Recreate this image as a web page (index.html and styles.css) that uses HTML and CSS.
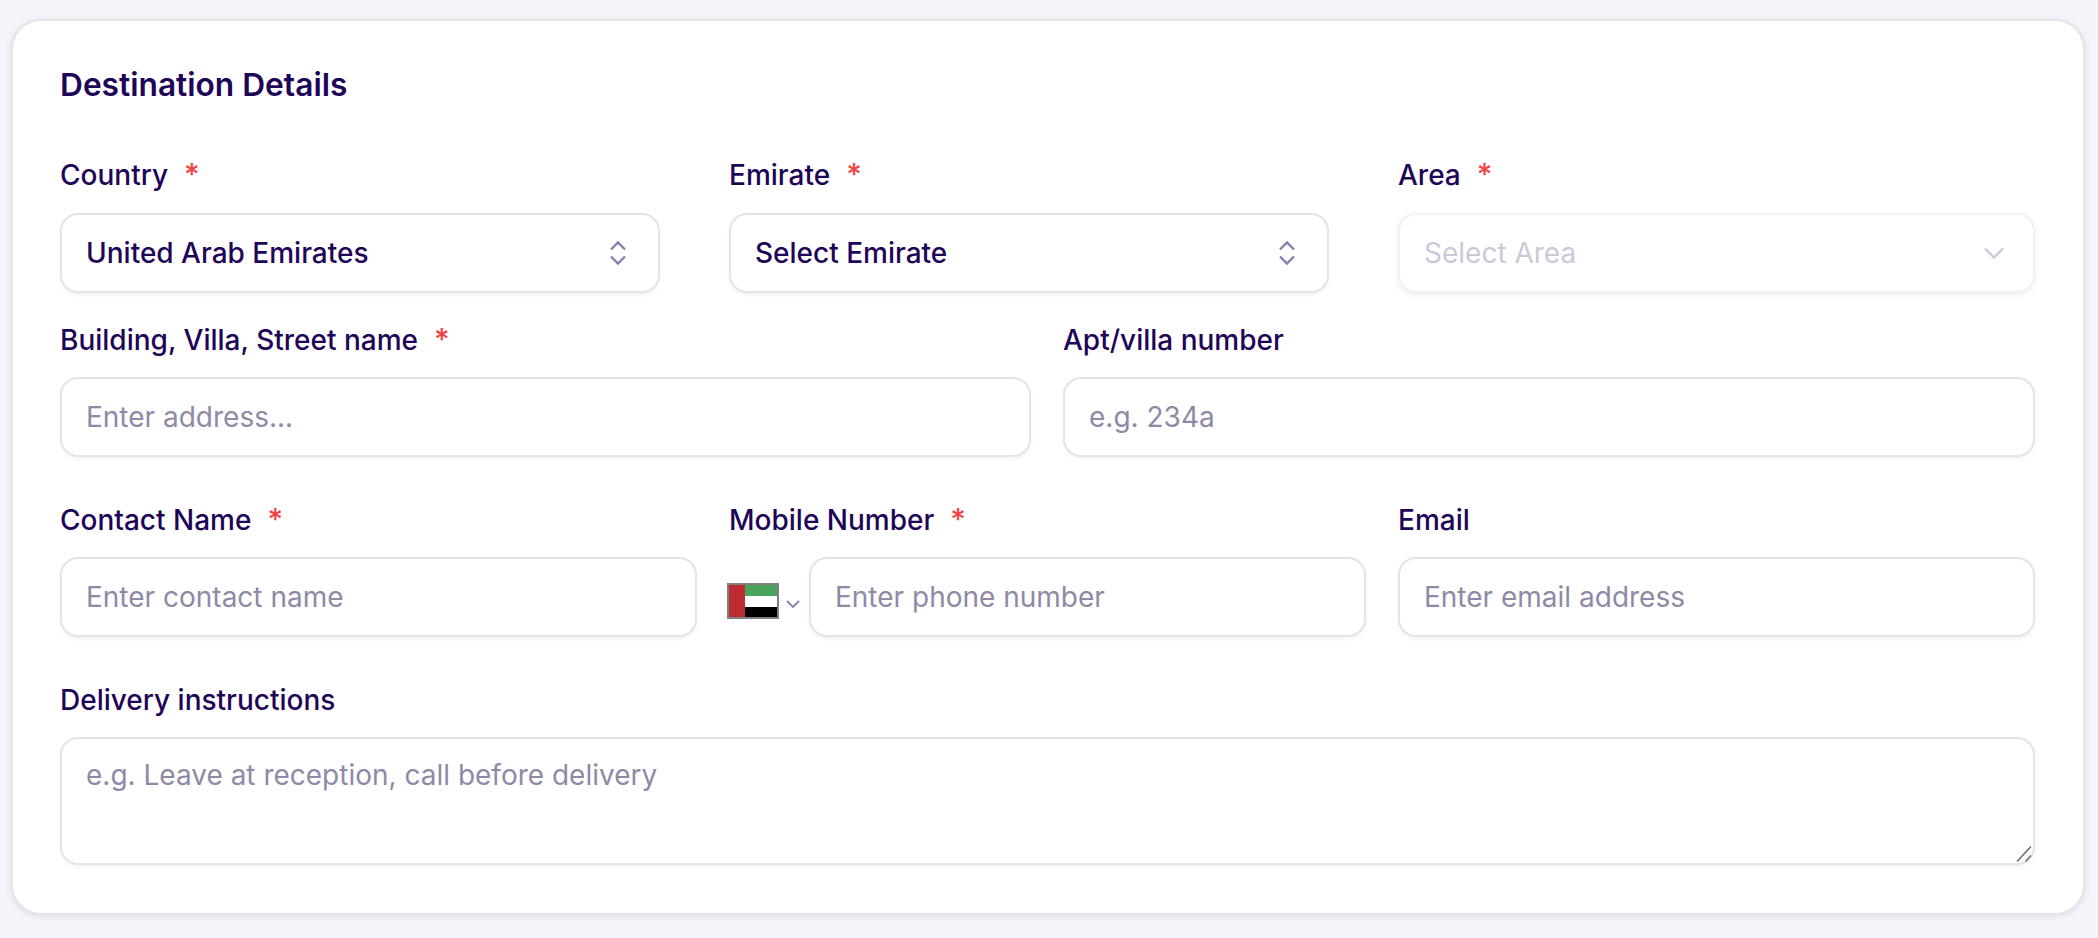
FILE: index.html
```html
<!DOCTYPE html>
<html lang="en">
<head>
<meta charset="utf-8">
<title>Destination Details</title>
<link rel="stylesheet" href="styles.css">
</head>
<body>
<main class="card">
  <h2 class="title">Destination Details</h2>
  <div class="row row-3 row-first">
    <div class="field">
      <div class="label">Country<span class="req">*</span></div>
      <div class="select narrow"><span>United Arab Emirates</span>
        <svg class="updown" viewBox="0 0 18 26"><path d="M2 9.5 9 2.5 16 9.5M2 16.5l7 7 7-7"/></svg></div>
    </div>
    <div class="field">
      <div class="label">Emirate<span class="req">*</span></div>
      <div class="select narrow"><span>Select Emirate</span>
        <svg class="updown" viewBox="0 0 18 26"><path d="M2 9.5 9 2.5 16 9.5M2 16.5l7 7 7-7"/></svg></div>
    </div>
    <div class="field">
      <div class="label">Area<span class="req">*</span></div>
      <div class="select disabled"><span>Select Area</span>
        <svg class="down" viewBox="0 0 20 12"><path d="M1 1.5l9 9 9-9"/></svg></div>
    </div>
  </div>
  <div class="row row-2 row-tight">
    <div class="field">
      <div class="label">Building, Villa, Street name<span class="req">*</span></div>
      <input class="input" placeholder="Enter address...">
    </div>
    <div class="field">
      <div class="label">Apt/villa number</div>
      <input class="input" placeholder="e.g. 234a">
    </div>
  </div>
  <div class="row row-3">
    <div class="field">
      <div class="label">Contact Name<span class="req">*</span></div>
      <input class="input" placeholder="Enter contact name">
    </div>
    <div class="field">
      <div class="label">Mobile Number<span class="req">*</span></div>
      <div class="phone">
        <div class="picker">
          <svg class="flag" viewBox="0 0 52 36">
            <rect width="52" height="36" fill="#808080"/>
            <rect x="18" y="2" width="32" height="11" fill="#49a35a"/>
            <rect x="18" y="13" width="32" height="11" fill="#fff"/>
            <rect x="18" y="24" width="32" height="10" fill="#000"/>
            <rect x="2" y="2" width="16" height="32" fill="#bd2c30"/>
          </svg>
          <svg class="flag-caret" viewBox="0 0 14 8"><path d="M1 1l6 6 6-6"/></svg>
        </div>
        <input class="input" placeholder="Enter phone number">
      </div>
    </div>
    <div class="field">
      <div class="label">Email</div>
      <input class="input" placeholder="Enter email address">
    </div>
  </div>
  <div class="row">
    <div class="field">
      <div class="label">Delivery instructions</div>
      <div class="area-wrap">
        <textarea class="input area" placeholder="e.g. Leave at reception, call before delivery"></textarea>
        <svg class="grip" viewBox="0 0 16 16"><path d="M1 15.5 15 .5M9.5 15.5 15 9.5"/></svg>
      </div>
    </div>
  </div>
</main>
</body>
</html>
```
FILE: styles.css
```css
* { box-sizing: border-box; }
html, body { margin: 0; height: 100%; }
body {
  background: #f4f5fa;
  padding: 19px 13px 0 11px;
  font-family: Inter, "Noto Sans", sans-serif;
  color: #1f0557;
  overflow: hidden;
}
.card {
  background: #fff;
  border: 2px solid #e4e4e9;
  border-radius: 30px;
  box-shadow: 0 1px 6px rgba(20, 20, 60, .1);
  padding: 46px 48px 48px 47px;
}
.title {
  margin: 0;
  font-size: 31.7px;
  line-height: 36px;
  font-weight: 600;
}
.row { display: grid; column-gap: 32px; margin-top: 46px; }
.row-3 { grid-template-columns: repeat(3, 1fr); }
.row-2 { grid-template-columns: 971px 1fr; }
.row-first { margin-top: 55px; }
.row-tight { margin-top: 30px; }
.field { min-width: 0; }
.label {
  font-size: 28px;
  line-height: 34px;
  font-weight: 500;
  margin-bottom: 20px;
}
.row-first .label { margin-bottom: 21px; }
.req {
  color: #ef4444;
  font-size: 30px;
  line-height: 0;
  margin-left: 16px;
}
.select, .input {
  display: block;
  width: 100%;
  height: 80px;
  border: 2px solid #e4e4e9;
  border-radius: 18px;
  background: #fff;
  box-shadow: 0 2px 4px rgba(20, 20, 60, .05);
  padding: 0 24px;
  font-family: inherit;
  font-size: 28px;
  color: #1f0557;
  outline: none;
}
.input::placeholder { color: #9089a5; opacity: 1; }
.select {
  display: flex;
  align-items: center;
  justify-content: space-between;
  font-weight: 500;
}
.narrow { max-width: 600px; }
.updown { width: 18px; height: 26px; margin-right: 7px; }
.down { width: 20px; height: 12px; margin-right: 5px; }
.updown path, .down path, .flag-caret path {
  fill: none;
  stroke: #8a7db0;
  stroke-width: 2.4;
}
.disabled {
  border-color: #f1f1f4;
  box-shadow: 0 2px 6px rgba(20, 20, 60, .07);
  color: #cbc9d8;
  font-weight: 400;
}
.disabled .down path { stroke: #cbc9d8; }
.phone { display: flex; align-items: center; margin-left: -2px; }
.picker { display: flex; align-items: center; flex: none; width: 82px; margin-top: 8px; }
.flag { width: 52px; height: 36px; display: block; }
.flag-caret { width: 14px; height: 8px; margin: 6px 0 0 7px; }
.flag-caret path { stroke-width: 1.8; }
.area-wrap { position: relative; }
.area {
  height: 128px;
  padding-top: 19px;
  line-height: 34px;
  resize: none;
}
.grip {
  position: absolute;
  right: 3px;
  bottom: 3px;
  width: 16px;
  height: 16px;
  pointer-events: none;
}
.grip path { fill: none; stroke: #6b6b6b; stroke-width: 1.5; }
```
